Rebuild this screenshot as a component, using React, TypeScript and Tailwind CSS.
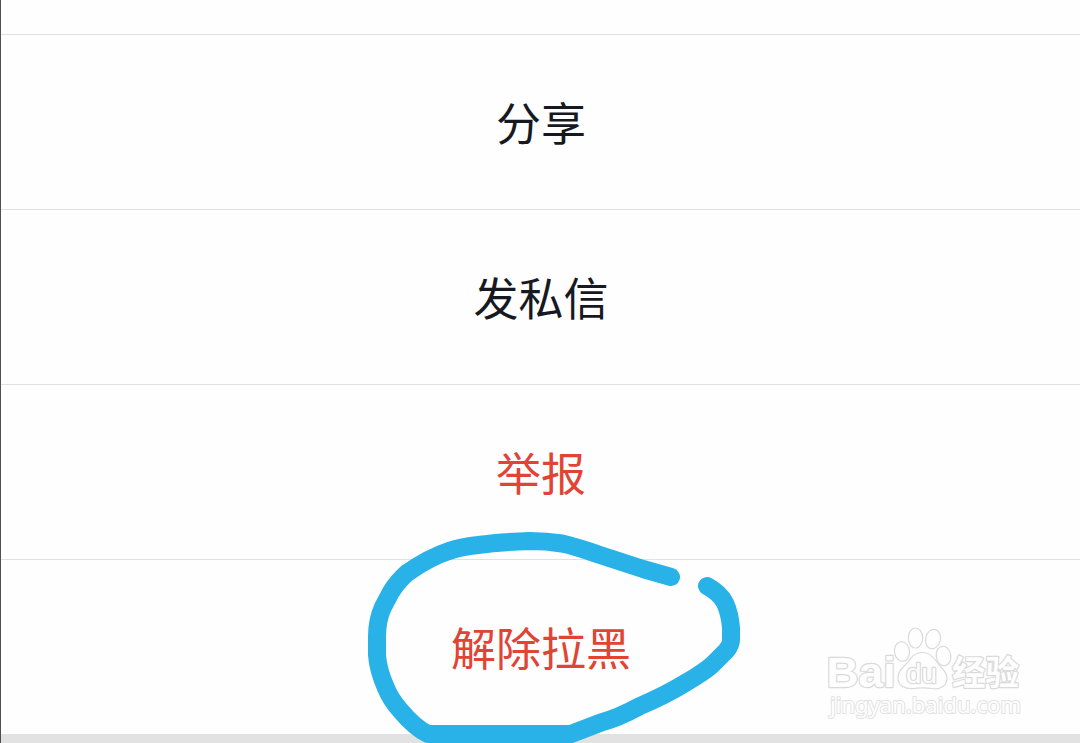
type Action = {
  label: string;
  danger?: boolean;
};

const actions: Action[] = [
  { label: "分享" },
  { label: "发私信" },
  { label: "举报", danger: true },
  { label: "解除拉黑", danger: true },
];

function Watermark() {
  return (
    <svg
      className="absolute left-[820px] top-[620px]"
      width="210"
      height="105"
      viewBox="0 0 210 105"
      fill="#fefefe"
      stroke="#dadada"
      strokeWidth="1.2"
      strokeLinejoin="round"
    >
      <text
        x="6.5"
        y="67"
        fontSize="43"
        strokeWidth="2.4"
        paintOrder="stroke"
        textLength="69"
        lengthAdjust="spacingAndGlyphs"
        className="font-['Liberation_Sans',sans-serif] font-bold"
      >
        Bai
      </text>
      {/* paw */}
      <ellipse cx="82" cy="31.5" rx="7.5" ry="9.8" transform="rotate(-8 82 31.5)" />
      <ellipse cx="95.5" cy="18" rx="7.2" ry="10" />
      <ellipse cx="113" cy="19" rx="7.4" ry="9.8" transform="rotate(12 113 19)" />
      <ellipse cx="123.5" cy="36" rx="7.3" ry="9.8" transform="rotate(-8 123.5 36)" />
      <path d="M102 32.5C95 32.5 91 37 88 42C84 47 78 50 78 58C78 66 85 69 93 68.5C100 67.5 105 67.5 112 68.5C121 70 127 65 127 58C127 51 120 47 117 42C113 36 109 32.5 102 32.5Z" />
      <text
        x="86"
        y="63"
        fontSize="27"
        strokeWidth="2.4"
        paintOrder="stroke"
        textLength="31"
        lengthAdjust="spacingAndGlyphs"
        className="font-['Liberation_Sans',sans-serif]"
      >
        du
      </text>
      <text
        x="132"
        y="65"
        fontSize="34"
        strokeWidth="2.4"
        paintOrder="stroke"
        textLength="67"
        lengthAdjust="spacingAndGlyphs"
        className="font-['Noto_Sans_CJK_SC',sans-serif] font-bold"
      >
        经验
      </text>
      <text
        x="10"
        y="93"
        fontSize="22"
        strokeWidth="2"
        stroke="#e2e2e2"
        paintOrder="stroke"
        textLength="191"
        lengthAdjust="spacingAndGlyphs"
        className="font-['Noto_Sans',sans-serif]"
      >
        jingyan.baidu.com
      </text>
    </svg>
  );
}

function Marker() {
  return (
    <svg
      className="absolute left-0 top-0"
      width="1080"
      height="743"
      viewBox="0 0 1080 743"
      fill="none"
      stroke="#29b2e8"
      strokeWidth="18"
      strokeLinecap="round"
      strokeLinejoin="round"
    >
      <path d="M671 577L643 569L600 555Q574 546 562 543.5Q546 541 530 541Q500 542 478 545Q460 547 449 551Q430 557 407 573Q397 582 391 592L383 607Q377 620 377 637V655Q378 670 386 688Q391 700 400 710Q415 728 428 734H571L601 722.5Q618 718 640 706Q666 695 687 682Q704 672 712 665L726 651Q731 645 731 640V628Q730 614 725 603Q720 593 707 586" />
    </svg>
  );
}

export default function App() {
  return (
    <main className="relative h-[743px] w-[1080px] overflow-hidden border-l border-[#4f4f4f] bg-[#fefefe]">
      <div className="h-[34px]" />
      <ul>
        {actions.map(({ label, danger }) => (
          <li key={label} className="h-[175px] border-t border-[#e1e1e1]">
            <button
              className={`flex h-full w-full items-center justify-center pb-px pl-px font-['Noto_Sans_CJK_SC',sans-serif] text-[45px] leading-none ${
                danger ? "text-[#e04434]" : "text-[#171922]"
              }`}
            >
              {label}
            </button>
          </li>
        ))}
      </ul>
      <div className="h-[9px] bg-[#e2e2e2]" />
      <div className="absolute -left-px top-0">
        <Marker />
        <Watermark />
      </div>
    </main>
  );
}
